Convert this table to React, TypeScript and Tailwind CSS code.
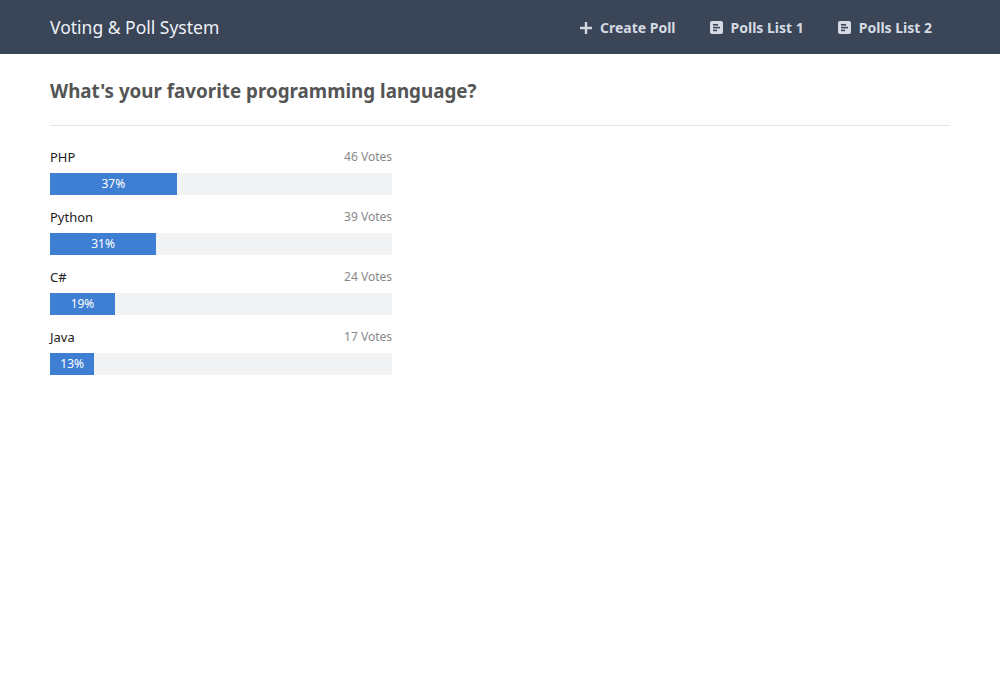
const options = [
  { label: "PHP", votes: 46, percent: 37 },
  { label: "Python", votes: 39, percent: 31 },
  { label: "C#", votes: 24, percent: 19 },
  { label: "Java", votes: 17, percent: 13 },
];

function ListIcon() {
  return (
    <svg width="13" height="13" viewBox="0 0 13 13" className="shrink-0">
      <rect x="0" y="0" width="13" height="13" rx="2" fill="#d5dae2" />
      <rect x="3" y="3" width="5" height="1.6" fill="#3a4558" />
      <rect x="3" y="5.8" width="7" height="1.6" fill="#3a4558" />
      <rect x="3" y="8.6" width="4" height="1.6" fill="#3a4558" />
    </svg>
  );
}

function PlusIcon() {
  return (
    <svg width="12" height="12" viewBox="0 0 12 12" className="shrink-0">
      <rect x="4.8" y="0" width="2.4" height="12" rx="0.5" fill="#d5dae2" />
      <rect x="0" y="4.8" width="12" height="2.4" rx="0.5" fill="#d5dae2" />
    </svg>
  );
}

export default function App() {
  return (
    <div
      className="min-h-[700px] bg-white"
      style={{ fontFamily: '"Noto Sans", "Open Sans", sans-serif' }}
    >
      <header className="flex h-[54px] items-center justify-between bg-[#3a4558] px-[50px]">
        <span className="text-[17.5px] text-[#eef1f5] pt-[1px]">Voting &amp; Poll System</span>
        <nav className="flex items-center gap-[34px] pr-[18px] pt-[1px]">
          <a className="flex items-center gap-[8px] text-[14px] font-bold text-[#d5dae2]">
            <PlusIcon />
            Create Poll
          </a>
          <a className="flex items-center gap-[8px] text-[14px] font-bold text-[#d5dae2]">
            <ListIcon />
            Polls List 1
          </a>
          <a className="flex items-center gap-[8px] text-[14px] font-bold text-[#d5dae2]">
            <ListIcon />
            Polls List 2
          </a>
        </nav>
      </header>

      <main className="px-[50px]">
        <h2 className="pt-[24px] text-[18.8px] font-bold text-[#555555] leading-[26px] pb-[21px] border-b border-[#e6e6e6]">
          What's your favorite programming language?
        </h2>

        <div className="mt-[22px] flex w-[342px] flex-col gap-[13.5px]">
          {options.map((o) => (
            <div key={o.label}>
              <div className="flex items-end justify-between pb-[5px]">
                <span className="text-[13px] text-[#222222]">{o.label}</span>
                <span className="text-[12px] text-[#888888] -translate-y-[2px]">{o.votes} Votes</span>
              </div>
              <div className="h-[22px] bg-[#f2f3f5]">
                <div
                  className="flex h-full items-center justify-center bg-[#3f7fd3] text-[12px] text-white"
                  style={{ width: `${o.percent}%` }}
                >
                  {o.percent}%
                </div>
              </div>
            </div>
          ))}
        </div>
      </main>
    </div>
  );
}
